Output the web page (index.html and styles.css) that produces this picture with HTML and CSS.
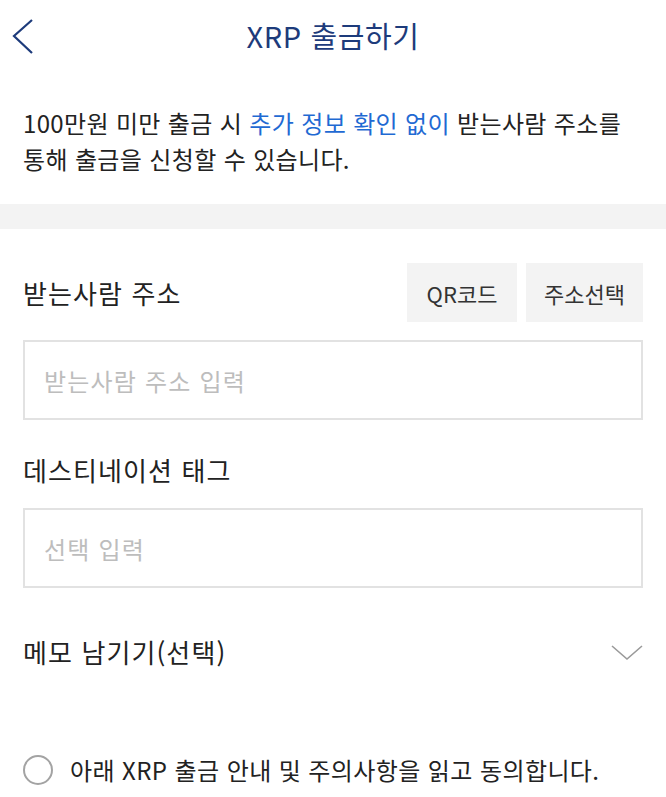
FILE: index.html
```html
<!DOCTYPE html>
<html lang="ko">
<head>
<meta charset="utf-8">
<title>XRP 출금하기</title>
<link rel="stylesheet" href="styles.css">
</head>
<body>
<div class="page">
  <header class="header">
    <button class="back" aria-label="뒤로">
      <svg width="24" height="40" viewBox="0 0 24 40"><path d="M21 4 L3 20 L21 37" fill="none" stroke="#1d3b7b" stroke-width="2.2" stroke-linejoin="miter"/></svg>
    </button>
    <h1 class="title">XRP 출금하기</h1>
  </header>

  <p class="notice">100만원 미만 출금 시 <span class="hl">추가 정보 확인 없이</span> 받는사람 주소를 통해 출금을 신청할 수 있습니다.</p>

  <div class="band"></div>

  <main class="form">
    <div class="row-head">
      <span class="label">받는사람 주소</span>
      <div class="btns">
        <button class="chip chip-qr">QR코드</button>
        <button class="chip chip-addr">주소선택</button>
      </div>
    </div>
    <input class="field" type="text" placeholder="받는사람 주소 입력">

    <div class="label label-tag">데스티네이션 태그</div>
    <input class="field field-tag" type="text" placeholder="선택 입력">

    <div class="memo">
      <span class="label">메모 남기기(선택)</span>
      <svg class="caret" width="32" height="16" viewBox="0 0 32 16"><path d="M1 1 L16 14 L31 1" fill="none" stroke="#9a9a9a" stroke-width="1.6"/></svg>
    </div>

    <label class="agree">
      <span class="radio"></span>
      <span class="agree-text">아래 XRP 출금 안내 및 주의사항을 읽고 동의합니다.</span>
    </label>
  </main>
</div>
</body>
</html>
```

FILE: styles.css
```css
* { box-sizing: border-box; }
html, body { margin: 0; padding: 0; background: #fff; }
body {
  font-family: "Noto Sans CJK KR", "Noto Sans", sans-serif;
  color: #222;
  width: 666px;
}
.page { display: flex; flex-direction: column; }

.header {
  height: 72px;
  display: flex;
  align-items: center;
  justify-content: center;
  position: relative;
}
.back {
  position: absolute;
  left: 11px;
  top: 16px;
  padding: 0;
  border: 0;
  background: none;
  width: 24px;
  height: 40px;
}
.back svg { display: block; }
.title {
  margin: 0 0 2px;
  font-size: 29px;
  font-weight: 400;
  color: #1d3b7b;
  line-height: 36px;
  letter-spacing: 0.6px;
}

.notice {
  margin: 0;
  padding: 33px 23px 27px;
  font-size: 24px;
  line-height: 36px;
  letter-spacing: 0.35px;
  color: #222;
}
.hl { color: #1f6ad3; }

.band { height: 25px; background: #f3f3f3; }

.form {
  padding: 0 23px;
  display: flex;
  flex-direction: column;
}
.row-head {
  margin-top: 34px;
  height: 59px;
  display: flex;
  align-items: center;
  justify-content: space-between;
}
.label {
  font-size: 26px;
  line-height: 36px;
  color: #222;
  letter-spacing: 1.1px;
}
.btns { display: flex; gap: 9px; }
.chip {
  height: 59px;
  border: 0;
  background: #f3f3f3;
  font-family: inherit;
  font-size: 22px;
  color: #333;
  padding: 0;
  letter-spacing: 0;
}
.chip-qr { width: 110px; }
.chip-addr { width: 117px; }

.field {
  margin-top: 18px;
  height: 80px;
  width: 100%;
  border: 2px solid #e2e2e2;
  padding: 0 19px;
  font-family: inherit;
  font-size: 24px;
  color: #222;
  outline: none;
  letter-spacing: 1.2px;
}
.field::placeholder { color: #bdbdbd; }

.label-tag { margin-top: 32px; }
.field-tag { margin-top: 20px; }

.memo {
  margin-top: 46px;
  height: 36px;
  display: flex;
  align-items: center;
  justify-content: space-between;
}
.caret { display: block; margin-top: 2px; }

.agree {
  margin-top: 82px;
  display: flex;
  align-items: center;
  gap: 17px;
  height: 36px;
}
.radio {
  width: 30px;
  height: 30px;
  border-radius: 50%;
  border: 2px solid #a3a3a3;
  flex: none;
}
.agree-text {
  font-size: 24px;
  line-height: 36px;
  color: #222;
  letter-spacing: 0.4px;
}
```
